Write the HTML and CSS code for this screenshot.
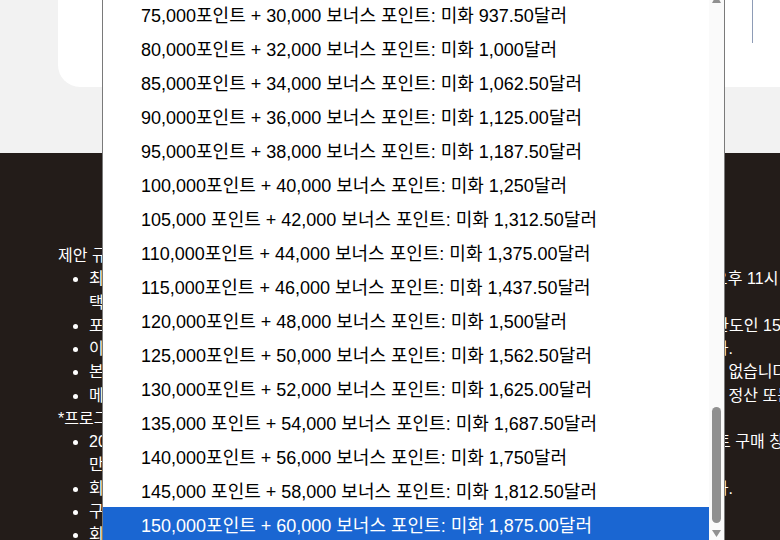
FILE: index.html
```html
<!DOCTYPE html>
<html lang="ko">
<head>
<meta charset="utf-8">
<title>포인트 구매</title>
<link rel="stylesheet" href="styles.css">
</head>
<body>
<div class="page">
  <section class="top">
    <div class="card">
      <div class="card-field"></div>
    </div>
  </section>

  <footer class="footer">
    <div class="terms">
      <p class="terms-title">제안 규정 및 조건:</p>
      <ul class="terms-list">
        <li>최대 구매 한도는 회원 계정당 연간 포인트 한도 내에서 적용되며, 프로모션은 2025년 2월 1일 오후 11시 59분(미국 동부 표준시)에 종료되며 선<br>택한 포인트 패키지에 한해 보너스가 지급됩니다.</li>
        <li>포인트는 1,000 포인트 단위로 구매하거나 선물할 수 있으며, 회원 본인 계정당 연간 최대 구매 한도인 150,000포인트까지 구매 가능합니다.</li>
        <li>이 프로모션은 다른 할인, 쿠폰 또는 프로모션과 중복하여 적용할 수 없으며 환불이 되지 않습니다.</li>
        <li class="tight">본 프로모션을 통해 구매한 포인트는, 환불, 취소, 또는 양도하거나, 다른 회원 계정으로 이전할 수 없습니다.</li>
        <li>메일로 발송되는 구매 확인서는 영수증으로 사용할 수 있으며, 포인트는 현금으로 환불 및 기타의 정산 또는 교환이 불가합니다.</li>
      </ul>
      <p class="terms-title">*프로그램 이용 약관:</p>
      <ul class="terms-list">
        <li>2025년 1월 1일부터 3월 31일까지 진행되는 프로모션 기간 동안, 본보이 공식 웹사이트의 포인트 구매 창에서 구매한 경우<br>만 해당되며 전화 구매는 제외됩니다.</li>
        <li>회원은 구매 전에 계정에 로그인해야 하며, 구매 완료 후 포인트는 회원 계정으로 즉시 적립됩니다.</li>
        <li>구매 가능 여부는 회원 등급에 따라 다를 수 있습니다.</li>
        <li>회원 약관의 모든 조건이 적용됩니다.</li>
      </ul>
    </div>
  </footer>

  <div class="dropdown">
    <div class="options">
      <div class="option">75,000포인트 + 30,000 보너스 포인트: 미화 937.50달러</div>
      <div class="option">80,000포인트 + 32,000 보너스 포인트: 미화 1,000달러</div>
      <div class="option">85,000포인트 + 34,000 보너스 포인트: 미화 1,062.50달러</div>
      <div class="option">90,000포인트 + 36,000 보너스 포인트: 미화 1,125.00달러</div>
      <div class="option">95,000포인트 + 38,000 보너스 포인트: 미화 1,187.50달러</div>
      <div class="option">100,000포인트 + 40,000 보너스 포인트: 미화 1,250달러</div>
      <div class="option">105,000 포인트 + 42,000 보너스 포인트: 미화 1,312.50달러</div>
      <div class="option">110,000포인트 + 44,000 보너스 포인트: 미화 1,375.00달러</div>
      <div class="option">115,000포인트 + 46,000 보너스 포인트: 미화 1,437.50달러</div>
      <div class="option">120,000포인트 + 48,000 보너스 포인트: 미화 1,500달러</div>
      <div class="option">125,000포인트 + 50,000 보너스 포인트: 미화 1,562.50달러</div>
      <div class="option">130,000포인트 + 52,000 보너스 포인트: 미화 1,625.00달러</div>
      <div class="option">135,000 포인트 + 54,000 보너스 포인트: 미화 1,687.50달러</div>
      <div class="option">140,000포인트 + 56,000 보너스 포인트: 미화 1,750달러</div>
      <div class="option">145,000 포인트 + 58,000 보너스 포인트: 미화 1,812.50달러</div>
      <div class="option selected">150,000포인트 + 60,000 보너스 포인트: 미화 1,875.00달러</div>
    </div>
    <div class="scrollbar">
      <svg class="arrow-up" width="15" height="6" viewBox="0 0 15 6"><path d="M7.5 -2 L12 6 L3 6 Z" fill="#909090"/></svg>
      <div class="scroll-space" style="height:404px"></div>
      <div class="thumb"></div>
      <svg class="arrow-down" width="15" height="15" viewBox="0 0 15 15"><path d="M3 7 L12 7 L7.5 14 Z" fill="#909090"/></svg>
    </div>
  </div>
</div>
</body>
</html>
```

FILE: styles.css
```css
html, body {
  margin: 0;
  padding: 0;
}
body {
  width: 780px;
  height: 540px;
  overflow: hidden;
  font-family: "Liberation Sans", "Noto Sans CJK KR", sans-serif;
  background: #231c19;
}
.page {
  position: relative;
  width: 780px;
  height: 540px;
  overflow: hidden;
}
.top {
  height: 153px;
  background: #f2f2f2;
  padding-left: 58px;
  box-sizing: border-box;
}
.card {
  height: 87px;
  background: #ffffff;
  border-bottom-left-radius: 22px;
}
.card-field {
  margin-left: 694px;
  width: 60px;
  height: 43px;
  border-left: 1px solid #8e9cb6;
}
.footer {
  background: #231c19;
  color: #ffffff;
  padding: 91px 0 0 58px;
  height: 387px;
  box-sizing: border-box;
}
.terms {
  font-size: 16px;
  line-height: 23.25px;
  white-space: nowrap;
  letter-spacing: 0.06px;
}
.terms-title {
  margin: 0;
}
.terms-list {
  margin: 0;
  padding-left: 31px;
}
.terms-list .tight {
  letter-spacing: 0;
}
.dropdown {
  position: absolute;
  left: 102px;
  top: -3px;
  width: 623px;
  height: 546px;
  box-sizing: border-box;
  border-left: 1px solid #7a7a7a;
  border-right: 1px solid #7a7a7a;
  background: #ffffff;
  display: flex;
  overflow: hidden;
}
.options {
  flex: 1;
  display: flex;
  flex-direction: column;
}
.option {
  height: 34px;
  box-sizing: border-box;
  padding: 4px 0 0 38px;
  line-height: 30px;
  font-size: 18px;
  color: #000000;
  white-space: nowrap;
  flex: none;
}
.option.selected {
  background: #1a66d2;
  color: #ffffff;
}
.scrollbar {
  width: 15px;
  flex: none;
  background: #fafafa;
  display: flex;
  flex-direction: column;
  align-items: center;
}
.arrow-up, .arrow-down {
  display: block;
  flex: none;
}
.scroll-space {
  flex: none;
}
.thumb {
  width: 9px;
  height: 116px;
  border-radius: 5px;
  background: #909090;
  flex: none;
}
```
